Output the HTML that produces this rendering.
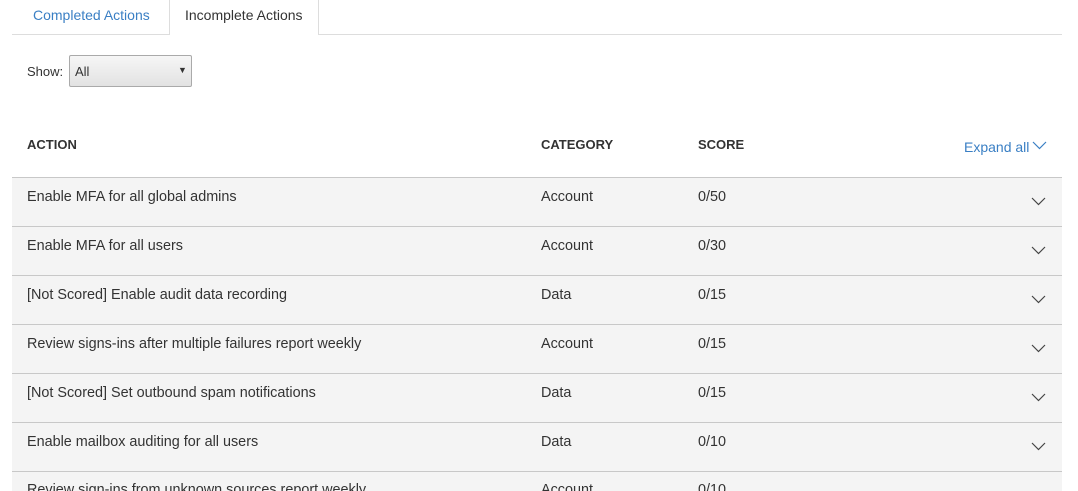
<!DOCTYPE html><html><head><style>
html,body{margin:0;width:1078px;height:491px;overflow:hidden}
body{background:#fff;font-family:"Liberation Sans",sans-serif;font-size:14.4px;color:#333;position:relative}
.a{position:absolute}
.row{position:absolute;left:12px;width:1050px;height:48px;background:#f4f4f4;border-top:1px solid #c8c8c8}
.row span{position:absolute;top:11px}
.chev{position:absolute;left:1019px;top:19px}
</style></head><body>
<div class="a" style="left:12px;top:34px;width:1050px;height:1px;background:#ddd"></div>
<div class="a" style="left:169px;top:0;width:148px;height:35px;border-left:1px solid #ddd;border-right:1px solid #ddd;background:#fff"></div>
<div class="a" style="left:33px;top:7px;color:#3a7fc4;font-size:14px">Completed Actions</div>
<div class="a" style="left:185px;top:7px;color:#333;font-size:14px">Incomplete Actions</div>
<div class="a" style="left:27px;top:64px;font-size:13px">Show:</div>
<div class="a" style="left:69px;top:55px;width:121px;height:30px;border:1px solid #aaa;border-radius:2px;background:linear-gradient(#f6f6f6,#e2e2e2)"><span class="a" style="left:5px;top:8px;font-size:13px">All</span><span class="a" style="left:108px;top:9px;font-size:9px">▼</span></div>
<div class="a" style="left:27px;top:137px;font-weight:bold;font-size:13px">ACTION</div>
<div class="a" style="left:541px;top:137px;font-weight:bold;font-size:13px">CATEGORY</div>
<div class="a" style="left:698px;top:137px;font-weight:bold;font-size:13px">SCORE</div>
<div class="a" style="left:964px;top:139px;color:#3a7fc4;font-size:14px">Expand all</div>
<svg class="a" style="left:1032px;top:141px" width="16" height="10"><path d="M1 1L7.5 7.5L14 1" fill="none" stroke="#3a7fc4" stroke-width="1.2"/></svg>
<div class="row" style="top:177px"><span style="left:15px">Enable MFA for all global admins</span><span style="left:529px">Account</span><span style="left:686px">0/50</span><svg class="chev" width="16" height="10"><path d="M1 1L7.5 7.5L14 1" fill="none" stroke="#444" stroke-width="1.2"/></svg></div>
<div class="row" style="top:226px"><span style="left:15px">Enable MFA for all users</span><span style="left:529px">Account</span><span style="left:686px">0/30</span><svg class="chev" width="16" height="10"><path d="M1 1L7.5 7.5L14 1" fill="none" stroke="#444" stroke-width="1.2"/></svg></div>
<div class="row" style="top:275px"><span style="left:15px">[Not Scored] Enable audit data recording</span><span style="left:529px">Data</span><span style="left:686px">0/15</span><svg class="chev" width="16" height="10"><path d="M1 1L7.5 7.5L14 1" fill="none" stroke="#444" stroke-width="1.2"/></svg></div>
<div class="row" style="top:324px"><span style="left:15px">Review signs-ins after multiple failures report weekly</span><span style="left:529px">Account</span><span style="left:686px">0/15</span><svg class="chev" width="16" height="10"><path d="M1 1L7.5 7.5L14 1" fill="none" stroke="#444" stroke-width="1.2"/></svg></div>
<div class="row" style="top:373px"><span style="left:15px">[Not Scored] Set outbound spam notifications</span><span style="left:529px">Data</span><span style="left:686px">0/15</span><svg class="chev" width="16" height="10"><path d="M1 1L7.5 7.5L14 1" fill="none" stroke="#444" stroke-width="1.2"/></svg></div>
<div class="row" style="top:422px"><span style="left:15px">Enable mailbox auditing for all users</span><span style="left:529px">Data</span><span style="left:686px">0/10</span><svg class="chev" width="16" height="10"><path d="M1 1L7.5 7.5L14 1" fill="none" stroke="#444" stroke-width="1.2"/></svg></div>
<div class="row" style="top:471px;height:19px;overflow:hidden"><span style="left:15px;top:10px">Review sign-ins from unknown sources report weekly</span><span style="left:529px;top:10px">Account</span><span style="left:686px;top:10px">0/10</span></div>
</body></html>
